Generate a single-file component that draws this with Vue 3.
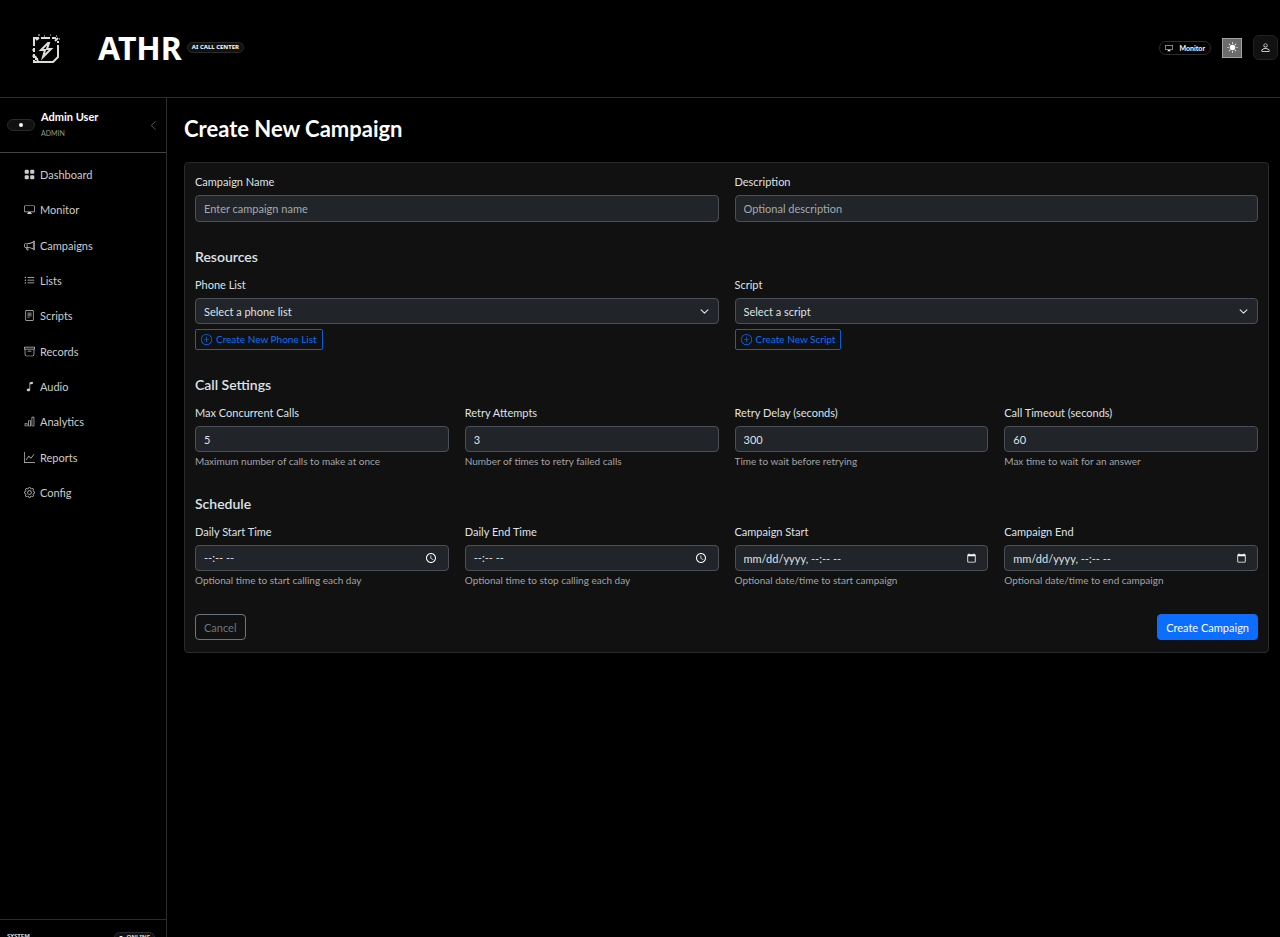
<template>
  <div class="app-shell">
    <header class="topbar">
      <a class="brand" href="#" aria-label="ATHR home">
        <span class="brand-logo">
          <svg width="30" height="32" viewBox="0 0 30 32" fill="none" stroke="#deded8" stroke-width="2">
            <path d="M4 14V6h5M11 6h9M22 6h4M28 9v2M28 13v12l-5 5H4v-2M4 26v-4M4 20v-4" />
            <path d="M5 24l3 5M5 27h3M6 8l3-2M25 9l3-3" />
            <path d="M8 3h2M14 4h1M20 3h1M29 7h1M26 4h1M2 18h1M2 24h1" stroke-width="1" />
            <path d="M18 11l-7 7h4l-2 7 8-8h-4l2-6z" />
          </svg>
        </span>
        <span class="brand-name">ATHR</span>
        <span class="brand-tag">AI CALL CENTER</span>
      </a>
      <div class="topbar-actions">
        <a class="monitor-pill" href="#">
          <svg class="bi" viewBox="0 0 16 16"><path :d="icons.display" fill-rule="evenodd" /></svg>
          Monitor
        </a>
        <button type="button" class="theme-btn" aria-label="Toggle theme">
          <svg class="bi" viewBox="0 0 16 16"><path :d="icons.sun" /></svg>
        </button>
        <button type="button" class="user-btn" aria-label="Account">
          <svg class="bi" viewBox="0 0 16 16"><path :d="icons.person" fill-rule="evenodd" /></svg>
        </button>
      </div>
    </header>

    <div class="body">
      <aside class="sidebar">
        <div class="sidebar-user">
          <span class="status-pill"><span class="dot"></span></span>
          <div class="user-text">
            <strong>Admin User</strong>
            <small>ADMIN</small>
          </div>
          <button type="button" class="collapse-btn" aria-label="Collapse sidebar">
            <svg class="bi" viewBox="0 0 16 16"><path :d="icons.chevronLeft" /></svg>
          </button>
        </div>
        <nav class="sidebar-nav">
          <a v-for="item in navItems" :key="item.label" href="#">
            <svg class="bi" viewBox="0 0 16 16"><path :d="icons[item.icon]" fill-rule="evenodd" /></svg>
            {{ item.label }}
          </a>
        </nav>
        <footer class="sidebar-footer">
          <span>SYSTEM</span>
          <span class="online"><span class="dot"></span>ONLINE</span>
        </footer>
      </aside>

      <main class="content">
        <h1>Create New Campaign</h1>
        <form class="card" @submit.prevent>
          <section class="row halves">
            <div class="field">
              <label for="name">Campaign Name</label>
              <input id="name" v-model="form.name" class="control tall" type="text" placeholder="Enter campaign name" />
            </div>
            <div class="field">
              <label for="description">Description</label>
              <input id="description" v-model="form.description" class="control tall" type="text" placeholder="Optional description" />
            </div>
          </section>

          <section>
            <h2>Resources</h2>
            <div class="row halves">
              <div v-for="r in resources" :key="r.id" class="field">
                <label :for="r.id">{{ r.label }}</label>
                <select :id="r.id" v-model="form[r.id]" class="control">
                  <option value="">{{ r.placeholder }}</option>
                </select>
                <button type="button" class="btn-create">
                  <svg class="bi" viewBox="0 0 16 16"><path :d="icons.plusCircle" /></svg>
                  {{ r.action }}
                </button>
              </div>
            </div>
          </section>

          <section v-for="group in groups" :key="group.title">
            <h2>{{ group.title }}</h2>
            <div class="row quarters">
              <div v-for="f in group.fields" :key="f.id" class="field">
                <label :for="f.id">{{ f.label }}</label>
                <input :id="f.id" v-model="form[f.id]" class="control" :type="f.type" />
                <p class="help">{{ f.help }}</p>
              </div>
            </div>
          </section>

          <div class="form-actions">
            <button type="button" class="btn btn-cancel">Cancel</button>
            <button type="submit" class="btn btn-primary">Create Campaign</button>
          </div>
        </form>
      </main>
    </div>
  </div>
</template>

<script setup>
import { reactive } from "vue";

const icons = {
  grid: "M1 2.5A1.5 1.5 0 0 1 2.5 1h3A1.5 1.5 0 0 1 7 2.5v3A1.5 1.5 0 0 1 5.5 7h-3A1.5 1.5 0 0 1 1 5.5zm8 0A1.5 1.5 0 0 1 10.5 1h3A1.5 1.5 0 0 1 15 2.5v3A1.5 1.5 0 0 1 13.5 7h-3A1.5 1.5 0 0 1 9 5.5zm-8 8A1.5 1.5 0 0 1 2.5 9h3A1.5 1.5 0 0 1 7 10.5v3A1.5 1.5 0 0 1 5.5 15h-3A1.5 1.5 0 0 1 1 13.5zm8 0A1.5 1.5 0 0 1 10.5 9h3a1.5 1.5 0 0 1 1.5 1.5v3a1.5 1.5 0 0 1-1.5 1.5h-3A1.5 1.5 0 0 1 9 13.5z",
  display: "M2 2h12a2 2 0 0 1 2 2v6a2 2 0 0 1-2 2h-4l.25 1.5H11a.5.5 0 0 1 0 1H5a.5.5 0 0 1 0-1h.75L6 12H2a2 2 0 0 1-2-2V4a2 2 0 0 1 2-2M2 3a1 1 0 0 0-1 1v6a1 1 0 0 0 1 1h12a1 1 0 0 0 1-1V4a1 1 0 0 0-1-1z",
  megaphone: "M13 2.5a1.5 1.5 0 0 1 3 0v11a1.5 1.5 0 0 1-3 0v-.214c-2.162-1.241-4.49-1.843-6.912-2.083l.405 2.712A1 1 0 0 1 5.51 15.1h-.548a1 1 0 0 1-.916-.599l-1.85-3.49-.202-.003A2.014 2.014 0 0 1 0 9V7a2.02 2.02 0 0 1 1.992-2.013 75 75 0 0 0 2.483-.075c3.043-.154 6.148-.849 8.525-2.199zm1 0v11a.5.5 0 0 0 1 0v-11a.5.5 0 0 0-1 0m-1 1.35c-2.344 1.205-5.209 1.842-8 2.033v4.233q.27.015.537.036c2.568.189 5.093.744 7.463 1.993zm-9 6.215v-4.13a95 95 0 0 1-1.992.052A1.02 1.02 0 0 0 1 7v2c0 .55.448 1.002 1.006 1.009A61 61 0 0 1 4 10.065m-.657.975 1.609 3.037.01.024h.548l-.002-.014-.443-2.966a68 68 0 0 0-1.722-.082z",
  list: "M5 11.5a.5.5 0 0 1 .5-.5h9a.5.5 0 0 1 0 1h-9a.5.5 0 0 1-.5-.5m0-4a.5.5 0 0 1 .5-.5h9a.5.5 0 0 1 0 1h-9a.5.5 0 0 1-.5-.5m0-4a.5.5 0 0 1 .5-.5h9a.5.5 0 0 1 0 1h-9a.5.5 0 0 1-.5-.5m-3 1a1 1 0 1 0 0-2 1 1 0 0 0 0 2m0 4a1 1 0 1 0 0-2 1 1 0 0 0 0 2m0 4a1 1 0 1 0 0-2 1 1 0 0 0 0 2",
  script: "M5 4h6v1H5zM5 6h6v1H5zM5 8h6v1H5zM5 10h3v1H5zM4 0h8a2 2 0 0 1 2 2v12a2 2 0 0 1-2 2H4a2 2 0 0 1-2-2V2a2 2 0 0 1 2-2M4 1a1 1 0 0 0-1 1v12a1 1 0 0 0 1 1h8a1 1 0 0 0 1-1V2a1 1 0 0 0-1-1z",
  archive: "M0 2a1 1 0 0 1 1-1h14a1 1 0 0 1 1 1v2a1 1 0 0 1-1 1v7.5a2.5 2.5 0 0 1-2.5 2.5h-9A2.5 2.5 0 0 1 1 12.5V5a1 1 0 0 1-1-1zm2 3v7.5A1.5 1.5 0 0 0 3.5 14h9a1.5 1.5 0 0 0 1.5-1.5V5zm13-3H1v2h14zM5 7.5a.5.5 0 0 1 .5-.5h5a.5.5 0 0 1 0 1h-5a.5.5 0 0 1-.5-.5",
  music: "M9 13c0 1.105-1.12 2-2.5 2S4 14.105 4 13s1.12-2 2.5-2 2.5.895 2.5 2V5l4-1V2.22a1 1 0 0 0-1.196-.98l-3 .6A1 1 0 0 0 8 2.82V12h1z",
  bars: "M4 11H2v3h2zm5-4H7v7h2zm5-5v12h-2V2zm-2-1a1 1 0 0 0-1 1v12a1 1 0 0 0 1 1h2a1 1 0 0 0 1-1V2a1 1 0 0 0-1-1zM6 7a1 1 0 0 1 1-1h2a1 1 0 0 1 1 1v7a1 1 0 0 1-1 1H7a1 1 0 0 1-1-1zm-5 4a1 1 0 0 1 1-1h2a1 1 0 0 1 1 1v3a1 1 0 0 1-1 1H2a1 1 0 0 1-1-1z",
  graph: "M0 0h1v15h15v1H0zm14.817 3.113a.5.5 0 0 1 .07.704l-4.5 5.5a.5.5 0 0 1-.74.037L7.06 6.767l-3.656 5.027a.5.5 0 0 1-.808-.588l4-5.5a.5.5 0 0 1 .758-.06l2.609 2.61 4.15-5.073a.5.5 0 0 1 .704-.07",
  gear: "M8 4.754a3.246 3.246 0 1 0 0 6.492 3.246 3.246 0 0 0 0-6.492M5.754 8a2.246 2.246 0 1 1 4.492 0 2.246 2.246 0 0 1-4.492 0M9.796 1.343c-.527-1.79-3.065-1.79-3.592 0l-.094.319a.873.873 0 0 1-1.255.52l-.292-.16c-1.64-.892-3.433.902-2.54 2.541l.159.292a.873.873 0 0 1-.52 1.255l-.319.094c-1.79.527-1.79 3.065 0 3.592l.319.094a.873.873 0 0 1 .52 1.255l-.16.292c-.892 1.64.901 3.434 2.541 2.54l.292-.159a.873.873 0 0 1 1.255.52l.094.319c.527 1.79 3.065 1.79 3.592 0l.094-.319a.873.873 0 0 1 1.255-.52l.292.16c1.64.893 3.434-.902 2.54-2.541l-.159-.292a.873.873 0 0 1 .52-1.255l.319-.094c1.79-.527 1.79-3.065 0-3.592l-.319-.094a.873.873 0 0 1-.52-1.255l.16-.292c.893-1.64-.902-3.433-2.541-2.54l-.292.159a.873.873 0 0 1-1.255-.52zm-2.633.283c.246-.835 1.428-.835 1.674 0l.094.319a1.873 1.873 0 0 0 2.693 1.115l.291-.16c.764-.415 1.6.42 1.184 1.185l-.159.292a1.873 1.873 0 0 0 1.116 2.692l.318.094c.835.246.835 1.428 0 1.674l-.319.094a1.873 1.873 0 0 0-1.115 2.693l.16.291c.415.764-.42 1.6-1.185 1.184l-.291-.159a1.873 1.873 0 0 0-2.693 1.116l-.094.318c-.246.835-1.428.835-1.674 0l-.094-.319a1.873 1.873 0 0 0-2.692-1.115l-.292.16c-.764.415-1.6-.42-1.184-1.185l.159-.291A1.873 1.873 0 0 0 1.945 8.93l-.319-.094c-.835-.246-.835-1.428 0-1.674l.319-.094A1.873 1.873 0 0 0 3.06 4.377l-.16-.292c-.415-.764.42-1.6 1.185-1.184l.292.159a1.873 1.873 0 0 0 2.692-1.115z",
  sun: "M8 12a4 4 0 1 0 0-8 4 4 0 0 0 0 8M7.5 0h1v3h-1zM7.5 13h1v3h-1zM0 7.5h3v1H0zM13 7.5h3v1h-3zM2.3 3l.7-.7 2.1 2.1-.7.7zM10.9 11.6l.7-.7 2.1 2.1-.7.7zM2.3 13l2.1-2.1.7.7L3 13.7zM10.9 4.4 13 2.3l.7.7-2.1 2.1z",
  person: "M8 8a3 3 0 1 0 0-6 3 3 0 0 0 0 6m2-3a2 2 0 1 1-4 0 2 2 0 0 1 4 0m4 8c0 1-1 1-1 1H3s-1 0-1-1 1-4 6-4 6 3 6 4m-1-.004c-.001-.246-.154-.986-.832-1.664C11.516 10.68 10.289 10 8 10s-3.516.68-4.168 1.332c-.678.678-.83 1.418-.832 1.664z",
  chevronLeft: "M11.354 1.646a.5.5 0 0 1 0 .708L5.707 8l5.647 5.646a.5.5 0 0 1-.708.708l-6-6a.5.5 0 0 1 0-.708l6-6a.5.5 0 0 1 .708 0",
  plusCircle: "M8 15A7 7 0 1 1 8 1a7 7 0 0 1 0 14m0 1A8 8 0 1 0 8 0a8 8 0 0 0 0 16M8 4a.5.5 0 0 1 .5.5v3h3a.5.5 0 0 1 0 1h-3v3a.5.5 0 0 1-1 0v-3h-3a.5.5 0 0 1 0-1h3v-3A.5.5 0 0 1 8 4",
};

const navItems = [
  { label: "Dashboard", icon: "grid" },
  { label: "Monitor", icon: "display" },
  { label: "Campaigns", icon: "megaphone" },
  { label: "Lists", icon: "list" },
  { label: "Scripts", icon: "script" },
  { label: "Records", icon: "archive" },
  { label: "Audio", icon: "music" },
  { label: "Analytics", icon: "bars" },
  { label: "Reports", icon: "graph" },
  { label: "Config", icon: "gear" },
];

const resources = [
  { id: "phoneList", label: "Phone List", placeholder: "Select a phone list", action: "Create New Phone List" },
  { id: "script", label: "Script", placeholder: "Select a script", action: "Create New Script" },
];

const groups = [
  {
    title: "Call Settings",
    fields: [
      { id: "maxCalls", label: "Max Concurrent Calls", type: "number", help: "Maximum number of calls to make at once" },
      { id: "retries", label: "Retry Attempts", type: "number", help: "Number of times to retry failed calls" },
      { id: "retryDelay", label: "Retry Delay (seconds)", type: "number", help: "Time to wait before retrying" },
      { id: "timeout", label: "Call Timeout (seconds)", type: "number", help: "Max time to wait for an answer" },
    ],
  },
  {
    title: "Schedule",
    fields: [
      { id: "dailyStart", label: "Daily Start Time", type: "time", help: "Optional time to start calling each day" },
      { id: "dailyEnd", label: "Daily End Time", type: "time", help: "Optional time to stop calling each day" },
      { id: "startAt", label: "Campaign Start", type: "datetime-local", help: "Optional date/time to start campaign" },
      { id: "endAt", label: "Campaign End", type: "datetime-local", help: "Optional date/time to end campaign" },
    ],
  },
];

const form = reactive({
  name: "",
  description: "",
  phoneList: "",
  script: "",
  maxCalls: 5,
  retries: 3,
  retryDelay: 300,
  timeout: 60,
  dailyStart: "",
  dailyEnd: "",
  startAt: "",
  endAt: "",
});
</script>

<style>
body {
  background: #000;
  color-scheme: dark;
}
</style>

<style scoped>
.app-shell {
  height: 100vh;
  overflow: hidden;
  background: #000;
  color: #dee2e6;
  font-family: Lato, "Noto Sans", sans-serif;
  font-size: 11px;
  line-height: 17px;
}

.app-shell *,
.app-shell *::before {
  box-sizing: border-box;
}

a {
  color: inherit;
  text-decoration: none;
}

button,
input,
select {
  font: inherit;
  margin: 0;
}

button {
  cursor: pointer;
}

.bi {
  width: 11px;
  height: 11px;
  fill: currentColor;
  flex: none;
}

.topbar {
  display: flex;
  justify-content: space-between;
  align-items: center;
  height: 98px;
  padding: 0 2px 2px 0;
  border-bottom: 1px solid #2d2d2d;
}

.brand {
  display: flex;
  align-items: center;
  color: #fff;
}

.brand-logo {
  display: grid;
  place-items: center;
  width: 90px;
  margin-right: 8px;
}

.brand-name {
  font-family: "Noto Sans", sans-serif;
  font-size: 32px;
  line-height: 40px;
  font-weight: 700;
}

.brand-tag {
  margin-left: 5px;
  padding: 0 4px;
  border: 1px solid #2a2a2a;
  border-radius: 6px;
  background: #111;
  font-family: "Noto Sans", sans-serif;
  font-size: 6px;
  line-height: 9px;
  font-weight: 700;
}

.topbar-actions {
  display: flex;
  align-items: center;
  gap: 11px;
}

.monitor-pill {
  display: flex;
  align-items: center;
  gap: 7px;
  padding: 0 5px;
  border: 1px solid #2d2d2d;
  border-radius: 7px;
  color: #fff;
  font-size: 7px;
  line-height: 12px;
  font-weight: 700;
}

.monitor-pill .bi {
  width: 8px;
  height: 8px;
}

.theme-btn {
  display: grid;
  place-items: center;
  width: 20px;
  height: 20px;
  padding: 0;
  border: 1px solid #a0a0a0;
  background: #6b6b6b;
  color: #fff;
}

.user-btn {
  display: grid;
  place-items: center;
  width: 25px;
  height: 25px;
  padding: 0;
  border: 1px solid #222;
  border-radius: 6px;
  background: #111;
  color: #fff;
}

.body {
  display: flex;
  align-items: flex-start;
}

.sidebar {
  display: flex;
  flex-direction: column;
  flex: none;
  width: 167px;
  height: calc(100vh - 80px);
  border-right: 1px solid #2d2d2d;
}

.sidebar-user {
  display: flex;
  align-items: center;
  height: 55px;
  padding: 0 7px;
  border-bottom: 1px solid #444;
}

.status-pill {
  display: grid;
  place-items: center;
  width: 28px;
  height: 12px;
  border: 1px solid #2a2a2a;
  border-radius: 6px;
  background: #111;
}

.dot {
  width: 4px;
  height: 4px;
  border-radius: 50%;
  background: #fff;
}

.user-text {
  display: flex;
  flex-direction: column;
  flex: 1;
  margin-left: 6px;
}

.user-text strong {
  color: #fff;
  font-weight: 700;
}

.user-text small {
  color: #8f9a8f;
  font-size: 7px;
}

.collapse-btn {
  display: flex;
  padding: 0;
  border: 0;
  background: none;
  color: #666;
}

.sidebar-nav {
  display: grid;
  grid-auto-rows: 1fr;
  height: 353px;
  margin-top: 4px;
  padding: 0 24px;
}

.sidebar-nav a {
  display: flex;
  align-items: center;
  gap: 5px;
  color: #ccc;
}

.sidebar-footer {
  display: flex;
  justify-content: space-between;
  height: 36px;
  margin-top: auto;
  padding: 12px 11px 0 7px;
  border-top: 1px solid #2d2d2d;
  color: #ddd;
  font-family: "Noto Sans", sans-serif;
  font-size: 6px;
  line-height: 9px;
  font-weight: 700;
}

.online {
  display: flex;
  align-items: center;
  gap: 3px;
  height: 11px;
  padding: 0 4px;
  border: 1px solid #2a2a2a;
  border-radius: 6px;
  background: #111;
}

.content {
  flex: 1;
  min-width: 0;
  padding: 16px 11px 16px 17px;
}

h1 {
  margin: 0 0 19px;
  color: #fff;
  font-size: 22px;
  line-height: 29px;
  font-weight: 700;
}

.card {
  display: flex;
  flex-direction: column;
  gap: 26px;
  padding: 10px 10px 12px;
  border: 1px solid #2a2a2a;
  border-radius: 4px;
  background: #111;
}

h2 {
  margin: 0 0 10px;
  font-size: 14px;
  line-height: 18px;
  font-weight: 600;
}

.row {
  display: grid;
  gap: 16px;
}

.halves {
  grid-template-columns: repeat(2, minmax(0, 1fr));
}

.quarters {
  grid-template-columns: repeat(4, minmax(0, 1fr));
}

.field {
  display: flex;
  flex-direction: column;
  align-items: flex-start;
}

.field label {
  margin-bottom: 5px;
}

.control {
  width: 100%;
  height: 26px;
  padding: 0 8px;
  border: 1px solid #495057;
  border-radius: 4px;
  background: #212529;
  color: #dee2e6;
}

.control.tall {
  height: 27px;
}

.control::placeholder {
  color: #a5a9ad;
}

.control::-webkit-datetime-edit-fields-wrapper,
.control::-webkit-datetime-edit-text,
.control::-webkit-datetime-edit-month-field,
.control::-webkit-datetime-edit-day-field,
.control::-webkit-datetime-edit-year-field,
.control::-webkit-datetime-edit-hour-field,
.control::-webkit-datetime-edit-minute-field,
.control::-webkit-datetime-edit-ampm-field {
  padding: 0;
}

select.control {
  appearance: none;
  background-image: url("data:image/svg+xml,%3csvg xmlns='http://www.w3.org/2000/svg' viewBox='0 0 16 16'%3e%3cpath fill='none' stroke='%23dee2e6' stroke-linecap='round' stroke-linejoin='round' stroke-width='2' d='m2 5 6 6 6-6'/%3e%3c/svg%3e");
  background-repeat: no-repeat;
  background-position: right 9px center;
  background-size: 9px 9px;
}

.control[type="number"] {
  appearance: textfield;
}

.btn-create {
  display: flex;
  align-items: center;
  gap: 4px;
  height: 21px;
  margin-top: 5px;
  padding: 0 5px;
  border: 1px solid #0d5fd8;
  border-radius: 2px;
  background: none;
  color: #0d6efd;
  font-size: 10px;
}

.help {
  margin: 2px 0 1px;
  color: #a1a4a7;
  font-size: 10px;
  line-height: 14px;
}

.form-actions {
  display: flex;
  justify-content: space-between;
}

.btn {
  height: 26px;
  padding: 0 8px;
  border: 1px solid;
  border-radius: 4px;
}

.btn-cancel {
  border-color: #6c757d;
  background: none;
  color: #6c757d;
}

.btn-primary {
  border-color: #0d6efd;
  background: #0d6efd;
  color: #fff;
}
</style>
